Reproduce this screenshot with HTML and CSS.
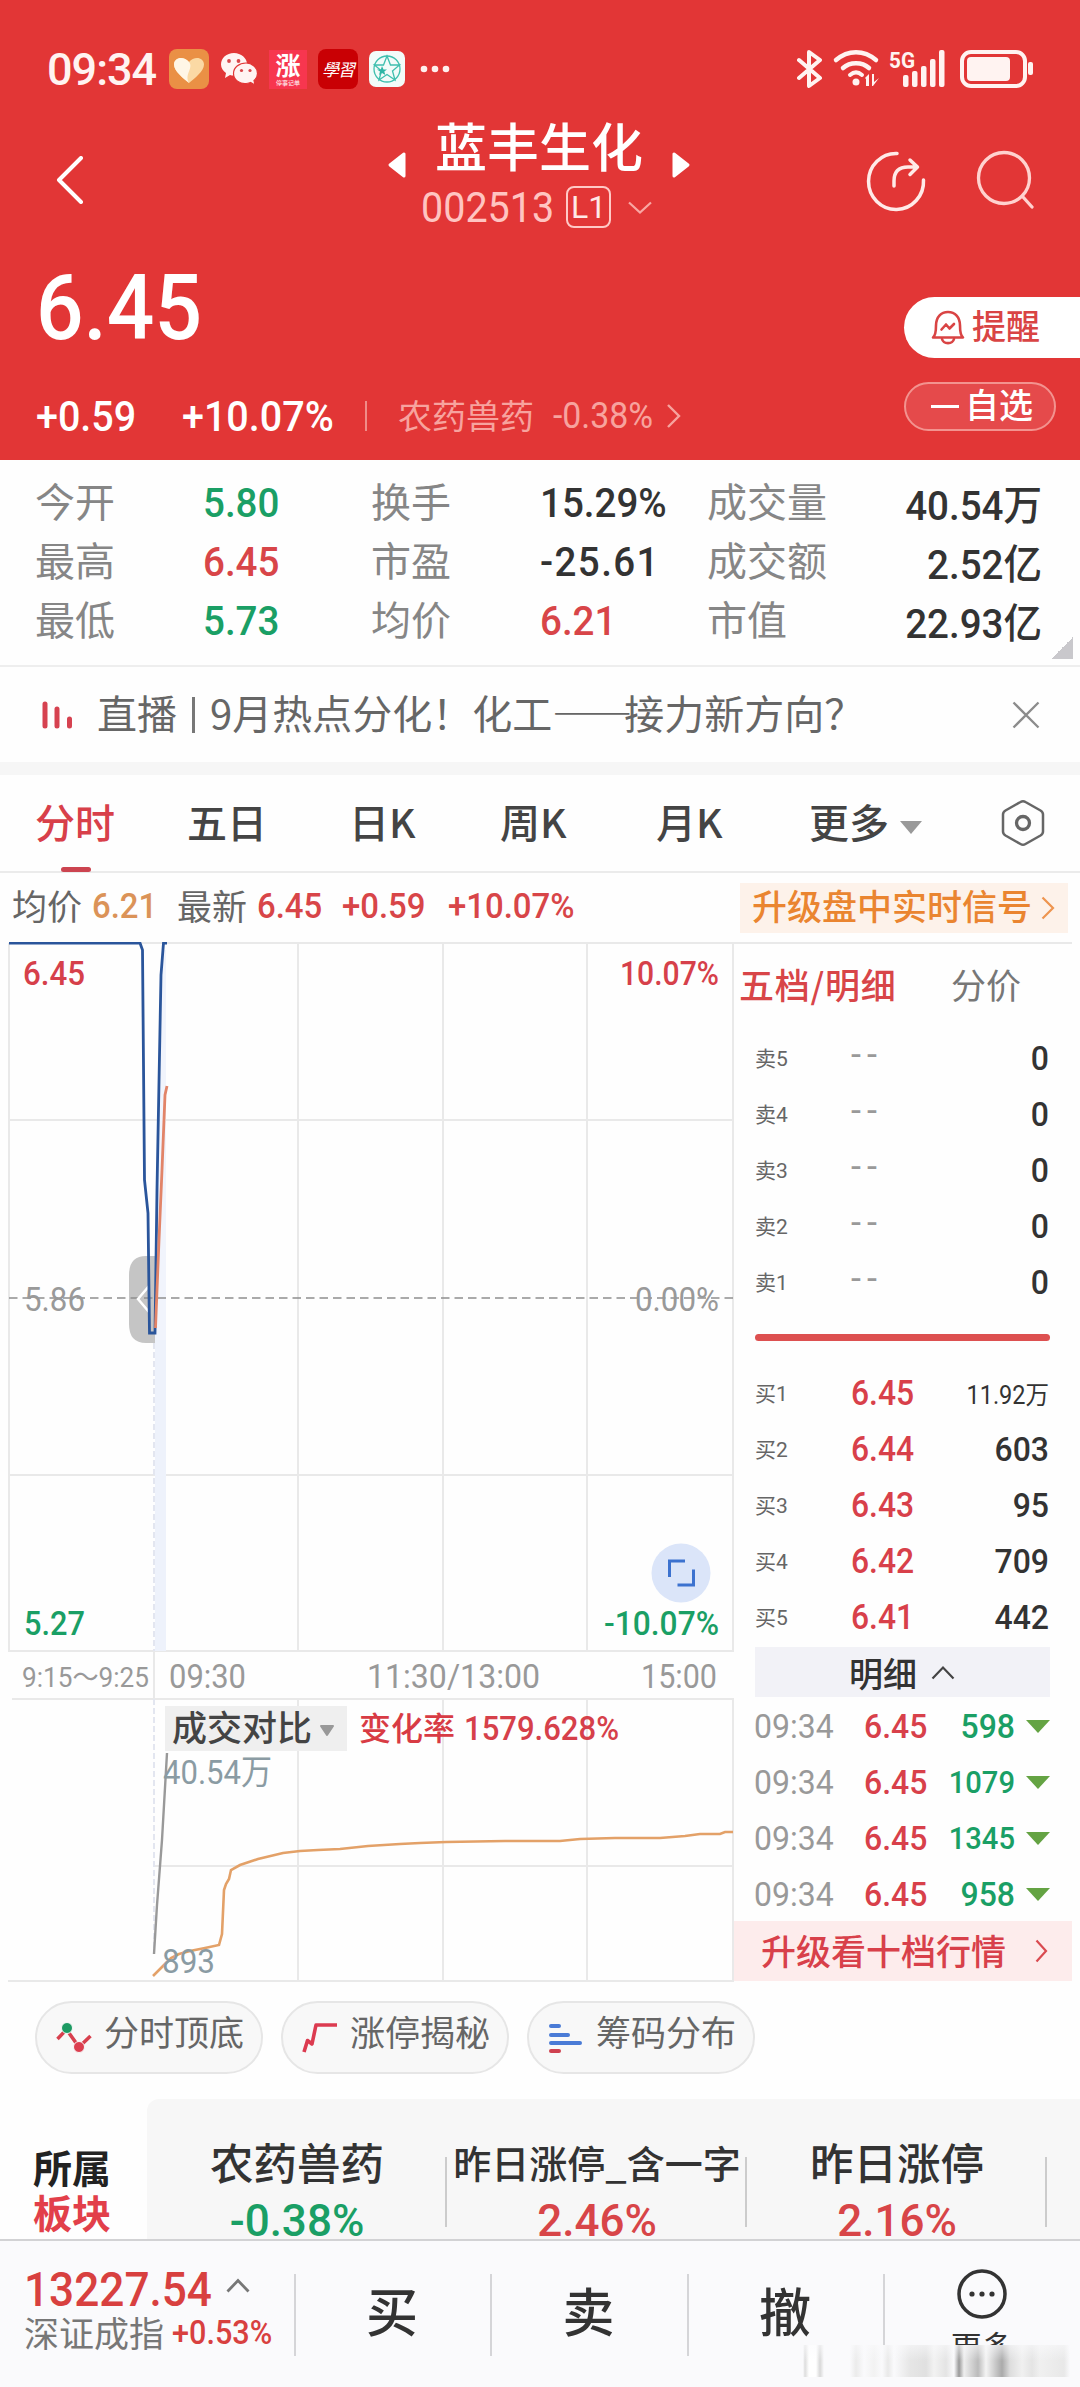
FILE: index.html
```
<!DOCTYPE html>
<html lang="zh-CN">
<head>
  <meta charset="UTF-8">
  <meta name="viewport" content="width=device-width, initial-scale=1.0">
  <title>蓝丰生化 002513</title>
  <link rel="stylesheet" href="styles.css">
</head>
<body>
<header class="top">
  <div class="status-bar">
    <span class="clock">09:34</span>
    <svg class="app-icon heart" width="40" height="40" viewBox="0 0 40 40">
      <rect width="40" height="40" rx="8" fill="#ea9045"/>
      <path d="M20 34C14 29 5 22 5 15.500C5 8 15 6.500 20 13C25 6.500 35 8 35 15.500C35 22 26 29 20 34Z" fill="#fbd9a4"/>
      <path d="M20 34C14 29 5 22 5 15.500C5 8 15 6.500 20 13C25 19 15 25 20 34Z" fill="#fff6e6"/>
    </svg>
    <svg class="app-icon wechat" width="38" height="34" viewBox="0 0 38 34">
      <path d="M14 1C6.500 1 1 6 1 12.500C1 16 3 19 6 21L5 26L10 23C17 25 27 21 27 12C27 6 21 1 14 1Z" fill="#fff4f2"/>
      <path d="M26 11C19 11 13.500 15.500 13.500 21.500C13.500 28 20 32 26 31.500C28 31.500 29 31 30.500 30.500L35 33L34 28.500C36 27 37.500 24.500 37.500 21.500C37.500 15.500 32 11 26 11Z" fill="#fff4f2" stroke="#e23636" stroke-width="1.200"/>
      <g fill="#d9474a"><circle cx="9" cy="9" r="1.900"/><circle cx="18.500" cy="9" r="1.900"/><circle cx="21.500" cy="18.500" r="1.600"/><circle cx="30" cy="18.500" r="1.600"/></g>
    </svg>
    <div class="app-icon zhang"><b>涨</b><i>停事记单</i></div>
    <div class="app-icon xuexi">學習</div>
    <svg class="app-icon star" width="36" height="36" viewBox="0 0 36 36">
      <rect width="36" height="36" rx="7" fill="#f3fbf9"/>
      <g fill="none" stroke="#3fbfae" stroke-width="1.300"><circle cx="18" cy="18" r="13"/><path d="M18 5L21.500 14H30.500L23.500 20L26 29L18 23.500L10 29L12.500 20L5.500 14H14.500Z"/></g>
      <path d="M13 15L14.500 18.500H18L15.300 20.600L16.300 24L13 22L10 24L11 20.500L8 18.500H11.800Z" fill="#2fb5a5"/>
    </svg>
    <svg class="dots" width="30" height="8" viewBox="0 0 30 8" fill="#fff0ee"><circle cx="4" cy="4" r="3.300"/><circle cx="15" cy="4" r="3.300"/><circle cx="26" cy="4" r="3.300"/></svg>

    <svg class="system" width="238" height="44" viewBox="797 47 238 44">
      <g fill="none" stroke="#fff3f1" stroke-linecap="round" stroke-linejoin="round">
        <path d="M799 60L820 78L809 86V52L820 60L799 78" stroke-width="4"/>
        <path d="M836 60C848 49.500 864 49.500 876 60" stroke-width="4.500"/>
        <path d="M843 68C850 61.500 862 61.500 869 68" stroke-width="4.500"/>
        <path d="M850 75C854 71.500 858 71.500 862 75" stroke-width="4"/>
        <rect x="962" y="52" width="63" height="34" rx="9" stroke-width="4"/>
      </g>
      <g fill="#fff3f1">
        <circle cx="856" cy="82" r="3.500"/>
        <path d="M865 78L869 74V86H866V79ZM872 74H874V82L879 78L873 86H872Z"/>
        <rect x="903" y="75" width="5.500" height="12" rx="2"/>
        <rect x="912" y="71" width="5.500" height="16" rx="2"/>
        <rect x="921" y="66" width="5.500" height="21" rx="2"/>
        <rect x="930" y="59" width="5.500" height="28" rx="2"/>
        <rect x="939" y="50" width="5.500" height="37" rx="2"/>
        <rect x="967" y="57" width="43" height="24" rx="4"/>
        <rect x="1028" y="62" width="5" height="13" rx="2"/>
      </g>
      <text x="889" y="68" class="g5" textLength="26" lengthAdjust="spacingAndGlyphs">5G</text>
    </svg>
  </div>

  <div class="nav">
    <svg class="back" width="28" height="48" viewBox="0 0 28 48"><path d="M25 2L3 24L25 46" fill="none" stroke="#fff" stroke-width="4" stroke-linecap="round" stroke-linejoin="round"/></svg>
    <svg class="prev" width="20" height="28" viewBox="0 0 20 28"><path d="M17 3V25L3 14Z" fill="#fff" stroke="#fff" stroke-width="3" stroke-linejoin="round"/></svg>
    <div class="stock">
      <h1>蓝丰生化</h1>
      <div class="code"><span class="num">002513</span><span class="level">L1</span>
        <svg width="24" height="13" viewBox="0 0 24 13"><path d="M1 1.500L12 11.500L23 1.500" fill="none" stroke="#f9a7a3" stroke-width="2.200"/></svg>
      </div>
    </div>
    <svg class="next" width="20" height="28" viewBox="0 0 20 28"><path d="M3 3V25L17 14Z" fill="#fff" stroke="#fff" stroke-width="3" stroke-linejoin="round"/></svg>
    <svg class="share" width="60" height="62" viewBox="0 0 60 62" fill="none" stroke="#ffeae8" stroke-width="3.500" stroke-linecap="round" stroke-linejoin="round"><path d="M31 3.500A27.500 28 0 1 0 57.500 30"/><path d="M28 36V31Q28 17 42 17H51M44 10L51.500 17L44 24.500"/></svg>
    <svg class="search" width="58" height="62" viewBox="0 0 58 62" fill="none" stroke="#ffd2cf" stroke-width="3.300" stroke-linecap="round"><circle cx="28" cy="29" r="25.500"/><path d="M47 48L56 58"/></svg>
  </div>

  <div class="quote">
    <div class="quote-left">
      <div class="price num">6.45</div>
      <div class="change">
        <span class="num diff">+0.59</span><span class="num pct">+10.07%</span><span class="bar"></span>
        <span class="industry">农药兽药</span><span class="num industry-pct">-0.38%</span>
        <svg width="16" height="26" viewBox="0 0 16 26"><path d="M2 2L13 13L2 24" fill="none" stroke="#f7a39e" stroke-width="2.400"/></svg>
      </div>
    </div>
    <div class="actions">
      <div class="remind">
        <svg width="34" height="36" viewBox="0 0 34 36" fill="none" stroke="#d94444" stroke-width="2.600" stroke-linejoin="round" stroke-linecap="round"><path d="M2 27.500C4.500 25.500 5 22 5 15.500C5 7 10 2 17 2S29 7 29 15.500C29 22 29.500 25.500 32 27.500Z"/><path d="M11 29C12.500 34.500 21.500 34.500 23 29"/><path d="M10.500 19.500L15 14.500L18.500 18.500L23 14"/></svg>
        <span>提醒</span>
      </div>
      <div class="favor"><i></i><span>自选</span></div>
    </div>
  </div>
</header>

<section class="stats">
  <span class="k">今开</span><span class="num green">5.80</span><span class="k">换手</span><span class="num">15.29%</span><span class="k">成交量</span><span class="num r">40.54万</span>
  <span class="k">最高</span><span class="num red">6.45</span><span class="k">市盈</span><span class="num spaced">-25.61</span><span class="k">成交额</span><span class="num r">2.52亿</span>
  <span class="k">最低</span><span class="num green">5.73</span><span class="k">均价</span><span class="num red">6.21</span><span class="k">市值</span><span class="num r">22.93亿</span>
  <i class="corner"></i>
</section>

<section class="notice">
  <svg width="32" height="28" viewBox="0 0 32 28" stroke="#d64250" stroke-width="5" stroke-linecap="round"><path d="M3 3V25M15 8V25M27.500 18V25"/></svg>
  <span class="notice-text">直播<i></i>9月热点分化！化工<span class="dash">——</span>接力新方向？</span>
  <svg width="28" height="28" viewBox="0 0 28 28" stroke="#8c8c8c" stroke-width="2.300"><path d="M1.500 1.500L26.500 26.500M26.500 1.500L1.500 26.500"/></svg>
</section>

<nav class="tabs">
  <span class="on">分时</span><span>五日</span><span>日K</span><span>周K</span><span>月K</span><span>更多<i class="down"></i></span>
  <svg width="44" height="48" viewBox="0 0 44 48" fill="none" stroke="#666"><path d="M19.500 3Q22 1.500 24.500 3L39.500 11.500Q42 13 42 15.500V32.500Q42 35 39.500 36.500L24.500 45Q22 46.500 19.500 45L4.500 36.500Q2 35 2 32.500V15.500Q2 13 4.500 11.500Z" stroke-width="2.500"/><circle cx="22" cy="24" r="6.500" stroke-width="3.300"/></svg>
</nav>

<div class="summary">
  <span class="lbl">均价</span><span class="num avg">6.21</span><span class="lbl">最新</span><span class="num red s1">6.45</span><span class="num red s2">+0.59</span><span class="num red s3">+10.07%</span>
  <div class="signal"><span>升级盘中实时信号</span><svg width="14" height="24" viewBox="0 0 14 24"><path d="M1.500 1.500L12 12L1.500 22.500" fill="none" stroke="#ee9550" stroke-width="2.200"/></svg></div>
</div>

<main class="board">
  <svg class="chart" width="734" height="1040" viewBox="0 942 734 1040">
    <!-- 网格 -->
    <g stroke="#e9e9e9" stroke-width="2">
      <path d="M9 943V1651M298 943V1651M443 943V1651M587 943V1651M733 943V1651"/>
      <path d="M9 943H734M9 1120H734M9 1475H734M8 1651H734M12 1699H734"/>
      <path d="M154 1651V1699M298 1699V1981M443 1699V1981M587 1699V1981M733 1699V1981M154 1866H734M8 1981H734"/>
      <path d="M154 1343V1651M154 1699V1954" stroke="#e3e6f0" stroke-dasharray="6 3"/>
    </g>
    <rect x="155" y="1330" width="11" height="321" fill="#eef2fb"/>
    <path d="M155 1332L163 950H166V1340H155Z" fill="#f1f4fc"/>
    <path d="M155 1256H146Q129 1256 129 1275V1324Q129 1343 146 1343H155Z" fill="#c5c5c5"/>
    <path d="M9 1298H733" stroke="#8f8f8f" stroke-width="1.500" stroke-dasharray="8.500 5"/>
    <path d="M149 1286L138 1299L149 1312" fill="none" stroke="#fff" stroke-width="2.500"/>
    <!-- 价格与均价线 -->
    <path d="M9 943H140L142.500 950L144.500 1180L148 1213L149.500 1333H155L157 1190L161 975L163.500 943H167" fill="none" stroke="#2a559b" stroke-width="2.800"/>
    <path d="M155.500 1328L159 1240L162 1170L165 1095L167 1086" fill="none" stroke="#e28468" stroke-width="2.800"/>
    <g class="axis">
      <text x="23" y="985" class="fr" textLength="62" lengthAdjust="spacingAndGlyphs">6.45</text>
      <text x="620" y="985" class="fr" textLength="99" lengthAdjust="spacingAndGlyphs">10.07%</text>
      <text x="24" y="1311" textLength="61" lengthAdjust="spacingAndGlyphs">5.86</text>
      <text x="635" y="1311" textLength="84" lengthAdjust="spacingAndGlyphs">0.00%</text>
      <text x="24" y="1635" class="fg" textLength="61" lengthAdjust="spacingAndGlyphs">5.27</text>
      <text x="604" y="1635" class="fg" textLength="115" lengthAdjust="spacingAndGlyphs">-10.07%</text>
      <text x="22" y="1687" class="sm" textLength="127" lengthAdjust="spacingAndGlyphs">9:15～9:25</text>
      <text x="169" y="1688" textLength="77" lengthAdjust="spacingAndGlyphs">09:30</text>
      <text x="367" y="1688" textLength="173" lengthAdjust="spacingAndGlyphs">11:30/13:00</text>
      <text x="641" y="1688" textLength="76" lengthAdjust="spacingAndGlyphs">15:00</text>
    </g>
    <circle cx="681" cy="1573" r="29.500" fill="#dbe5f9"/>
    <path d="M685 1561H669.500V1577M677.500 1585H693.500V1569.500" fill="none" stroke="#3c72cf" stroke-width="3"/>
    <!-- 成交对比 -->
    <path d="M167 1753L162 1840L157 1905L154 1954" fill="none" stroke="#999" stroke-width="2.400"/>
    <path d="M153 1976L160 1969L164 1965L171 1958L179 1954L190 1951L205 1948L219 1945L222 1934L224 1890L226 1884L229 1879L231 1870L240 1865L258 1859L283 1853L300 1851L318 1850L340 1849L368 1846L400 1844L420 1843L446 1842L505 1841L560 1841L580 1839L615 1838L660 1838L685 1836L700 1834L720 1834L725 1832H733" fill="none" stroke="#e3a168" stroke-width="2.600"/>
    <rect x="165" y="1706" width="182" height="45" fill="#efefef"/>
    <text x="172" y="1741" class="cn" fill="#444" font-size="35">成交对比</text>
    <path d="M321 1726H333L327 1735Z" fill="#999" stroke="#999" stroke-width="2" stroke-linejoin="round"/>
    <text x="359" y="1740" class="cn" fill="#d83b44" font-size="32">变化率</text>
    <g class="axis">
      <text x="464" y="1740" class="fr" textLength="155" lengthAdjust="spacingAndGlyphs">1579.628%</text>
      <text x="163" y="1784" class="fb" textLength="109" lengthAdjust="spacingAndGlyphs">40.54万</text>
      <text x="162" y="1973" class="fb" textLength="53" lengthAdjust="spacingAndGlyphs">893</text>
    </g>
  </svg>

  <aside class="depth">
    <div class="depth-tabs"><span class="red">五档/明细</span><span>分价</span></div>
    <ul class="levels">
      <li><span>卖5</span><b class="none">--</b><em class="num">0</em></li>
      <li><span>卖4</span><b class="none">--</b><em class="num">0</em></li>
      <li><span>卖3</span><b class="none">--</b><em class="num">0</em></li>
      <li><span>卖2</span><b class="none">--</b><em class="num">0</em></li>
      <li><span>卖1</span><b class="none">--</b><em class="num">0</em></li>
    </ul>
    <div class="ratio"></div>
    <ul class="levels">
      <li><span>买1</span><b class="num">6.45</b><em class="num small">11.92万</em></li>
      <li><span>买2</span><b class="num">6.44</b><em class="num">603</em></li>
      <li><span>买3</span><b class="num">6.43</b><em class="num">95</em></li>
      <li><span>买4</span><b class="num">6.42</b><em class="num">709</em></li>
      <li><span>买5</span><b class="num">6.41</b><em class="num">442</em></li>
    </ul>
    <div class="detail-bar">明细<svg width="24" height="15" viewBox="0 0 24 15"><path d="M1.500 13.500L12 2.500L22.500 13.500" fill="none" stroke="#444" stroke-width="2.200"/></svg></div>
    <ul class="trades">
      <li><span class="num">09:34</span><b class="num">6.45</b><em class="num">598</em><i></i></li>
      <li><span class="num">09:34</span><b class="num">6.45</b><em class="num long">1079</em><i></i></li>
      <li><span class="num">09:34</span><b class="num">6.45</b><em class="num long">1345</em><i></i></li>
      <li><span class="num">09:34</span><b class="num">6.45</b><em class="num">958</em><i></i></li>
    </ul>
    <div class="upgrade"><span>升级看十档行情</span><svg width="13" height="24" viewBox="0 0 13 24"><path d="M1.500 1.500L11 12L1.500 22.500" fill="none" stroke="#d94a50" stroke-width="2.200"/></svg></div>
  </aside>
</main>

<div class="tools">
  <div class="tool">
    <svg width="38" height="32" viewBox="0 0 38 32"><path d="M2.500 17L11.500 7.500L24 25L35.500 14" fill="none" stroke="#d8404e" stroke-width="3.500"/><circle cx="12" cy="6" r="5.500" fill="#1c9a62" stroke="#f8f8f8"/><circle cx="24" cy="25" r="5.500" fill="#dc3f50" stroke="#f8f8f8"/></svg>
    <span>分时顶底</span>
  </div>
  <div class="tool">
    <svg width="38" height="32" viewBox="0 0 38 32"><path d="M3 30L6.500 18.500L11 22L15 3H36" fill="none" stroke="#dc3b50" stroke-width="3.600" stroke-linejoin="round"/></svg>
    <span>涨停揭秘</span>
  </div>
  <div class="tool">
    <svg width="38" height="32" viewBox="0 0 38 32" stroke-width="4" stroke-linecap="round"><path d="M4 4H12M4 13H21M4 21H33" stroke="#4a7bd6"/><path d="M4 29H12" stroke="#cf4150"/></svg>
    <span>筹码分布</span>
  </div>
</div>

<section class="sectors">
  <div class="belong"><span>所属</span><span class="hot">板块</span></div>
  <div class="sector-list">
    <div class="sector"><span>农药兽药</span><b class="num green">-0.38%</b></div>
    <div class="sector"><span class="tight">昨日涨停_含一字</span><b class="num red">2.46%</b></div>
    <div class="sector"><span>昨日涨停</span><b class="num red">2.16%</b></div>
  </div>
</section>

<footer class="trade-bar">
  <div class="index">
    <div class="index-top"><b class="num">13227.54</b><svg width="24" height="15" viewBox="0 0 24 15"><path d="M1.500 13.500L12 2.500L22.500 13.500" fill="none" stroke="#777" stroke-width="2.800"/></svg></div>
    <div class="index-sub"><span>深证成指</span><b class="num">+0.53%</b></div>
  </div>
  <div class="btn">买</div>
  <div class="btn">卖</div>
  <div class="btn">撤</div>
  <div class="btn more">
    <svg width="52" height="52" viewBox="0 0 52 52"><circle cx="26" cy="26" r="23" fill="none" stroke="#333" stroke-width="3.500"/><g fill="#333"><circle cx="16" cy="26" r="2.600"/><circle cx="26" cy="26" r="2.600"/><circle cx="36" cy="26" r="2.600"/></g></svg>
    <span>更多</span>
  </div>
  <div class="smear"></div>
</footer>
</body>
</html>
```
FILE: styles.css
```
* {
  margin: 0;
  padding: 0;
  box-sizing: border-box;
}

body {
  width: 1080px;
  height: 2387px;
  overflow: hidden;
  background: #fefefe;
  color: #333;
  font-family: "Noto Sans CJK SC", sans-serif;
}

svg {
  display: block;
  flex: none;
}

i, em {
  font-style: normal;
}

ul {
  list-style: none;
}

/* 窄体数字 */
.num {
  font-family: Roboto, "Noto Sans CJK SC", sans-serif;
  font-weight: 500;
  white-space: nowrap;
  transform: scaleX(.94);
  transform-origin: left center;
}

.red { color: #d84548; }
.green { color: #1a9f65; }

/* 顶部 */
.top {
  height: 460px;
  background: #e23636;
  color: #fff;
}

.status-bar {
  display: flex;
  align-items: center;
  height: 138px;
  padding-left: 47px;
}

.clock {
  width: 122px;
  font: 500 45px Roboto, sans-serif;
  letter-spacing: -1px;
  color: #fff3f1;
}

.app-icon { margin-right: 11px; }

.zhang {
  display: flex;
  flex-direction: column;
  align-items: center;
  width: 38px;
  height: 39px;
  background: #f7364f;
}

.zhang b { font-size: 25px; line-height: 28px; }
.zhang i { font-size: 6px; line-height: 9px; }

.xuexi {
  width: 40px;
  height: 40px;
  border-radius: 8px;
  background: #c90004;
  font: italic 17px/40px "Noto Sans CJK SC", sans-serif;
  text-align: center;
  letter-spacing: -1px;
}

.dots { margin-left: 4px; }

.system {
  margin-left: auto;
  margin-right: 45px;
}

.g5 {
  font: 700 22px Roboto, sans-serif;
  fill: #fff3f1;
}

.nav {
  display: flex;
  height: 122px;
}

.back { margin: 18px 0 0 56px; }
.prev { margin: 13px 0 0 303px; }

.stock {
  width: 266px;
  margin-left: 14px;
}

.stock h1 {
  margin: -19px 0 0 14px;
  font-size: 52px;
  font-weight: 500;
  line-height: 52px;
  white-space: nowrap;
}

.code {
  display: flex;
  align-items: center;
  height: 44px;
  margin-top: 14px;
  color: #ffc4c1;
}

.code .num {
  width: 145px;
  font-size: 42px;
  font-weight: 400;
}

.level {
  width: 45px;
  height: 42px;
  margin-right: 17px;
  border: 2px solid #ffc9c6;
  border-radius: 8px;
  color: #ffe9e7;
  font: 32px/39px Roboto, sans-serif;
  text-align: center;
}

.next { margin: 13px 0 0 -16px; }
.share { margin: 12px 0 0 175px; }
.search { margin: 11px 0 0 50px; }

.quote {
  display: flex;
  justify-content: space-between;
  height: 200px;
}

.quote-left { padding-left: 36px; }

.price {
  height: 106px;
  padding-top: 3px;
  font-size: 91px;
  line-height: 90px;
  transform: scaleX(.92);
}

.change {
  display: flex;
  align-items: center;
  height: 44px;
  margin-top: 28px;
  font-size: 42px;
  color: #f7a39e;
}

.change .diff { width: 146px; color: #fff; }
.change .pct { width: 183px; color: #fff; }

.bar {
  width: 2px;
  height: 30px;
  margin-right: 31px;
  background: #f08c88;
}

.industry {
  width: 155px;
  margin-top: -3px;
  font-size: 34px;
}

.change .industry-pct {
  width: 113px;
  font-size: 36px;
  font-weight: 400;
}

.actions {
  width: 176px;
  padding-top: 37px;
}

.remind {
  display: flex;
  align-items: center;
  height: 61px;
  padding-left: 27px;
  border-radius: 31px 0 0 31px;
  background: #fff;
  color: #d94444;
  font-size: 34px;
  font-weight: 500;
}

.remind span { margin: -6px 0 0 7px; }

.favor {
  display: flex;
  align-items: center;
  width: 152px;
  height: 49px;
  margin-top: 24px;
  padding-left: 25px;
  border: 2px solid #f3938f;
  border-radius: 25px;
  background: #e54a4b;
  font-size: 34px;
  font-weight: 500;
  line-height: 44px;
}

.favor i {
  width: 28px;
  height: 3px;
  margin-right: 6px;
  background: #fff;
}

.favor span { margin-top: -5px; }

/* 行情数据 */
.stats {
  position: relative;
  display: grid;
  grid-template-columns: 168px 168px 169px 167px 170px 165px;
  grid-auto-rows: 59px;
  align-items: center;
  height: 207px;
  padding: 12px 0 0 35px;
  border-bottom: 2px solid #eee;
  font-size: 41px;
}

.stats .k {
  margin-top: -4px;
  color: #868686;
  font-size: 40px;
}

.stats .num { margin-top: 2px; }

.stats .r {
  margin-top: 0;
  text-align: right;
  transform-origin: right center;
}

.stats .spaced { letter-spacing: 1.5px; }

.corner {
  position: absolute;
  right: 7px;
  bottom: 6px;
  width: 22px;
  height: 22px;
  background: linear-gradient(135deg, transparent 50%, #c9c8cc 50%);
}

.notice {
  display: flex;
  align-items: center;
  height: 95px;
  padding: 0 40px 0 42px;
  color: #666;
}

.notice-text {
  flex: 1;
  margin: -6px 0 0 23px;
  font-size: 40px;
  white-space: nowrap;
}

.notice-text i {
  display: inline-block;
  width: 3px;
  height: 36px;
  margin: 0 15px;
  background: #777;
  vertical-align: -4px;
}

.dash { letter-spacing: -8px; }

.tabs {
  display: grid;
  grid-template-columns: 152px 162px 151px 156px 153px 192px 46px;
  align-items: center;
  height: 111px;
  padding: 13px 0 0 35px;
  border-bottom: 2px solid #ebebeb;
  background: linear-gradient(#f6f6f6 13px, #fefefe 13px);
  color: #444;
  font-size: 40px;
  font-weight: 500;
}

.tabs span {
  position: relative;
  margin-top: -5px;
  white-space: nowrap;
}

.tabs .on { color: #d8404a; }

.tabs .on::after {
  content: '';
  position: absolute;
  left: 26px;
  bottom: -22px;
  width: 30px;
  height: 5px;
  border-radius: 3px;
  background: #cc4450;
}

.down {
  display: inline-block;
  margin-left: 11px;
  border: 11px solid transparent;
  border-top: 13px solid #999;
  border-bottom: 0;
  vertical-align: 4px;
}

.summary {
  display: flex;
  align-items: center;
  height: 69px;
  padding-left: 12px;
  font-size: 35px;
}

.summary .num { margin-top: -3px; }
.lbl { width: 80px; margin-top: -7px; color: #666; }
.avg { width: 85px; color: #db9358; }
.s1 { width: 85px; }
.s2 { width: 106px; }
.s3 { width: 292px; }

.signal {
  display: flex;
  align-items: center;
  gap: 9px;
  width: 328px;
  height: 50px;
  padding-left: 12px;
  background: #fdf2ea;
  color: #ea8530;
  font-weight: 500;
  white-space: nowrap;
}

.signal span { margin-top: -7px; }

/* 分时图 + 盘口 */
.board {
  display: flex;
  height: 1040px;
}

.axis text {
  font: 34px Roboto, "Noto Sans CJK SC", sans-serif;
  fill: #999;
}

.axis .sm { font-size: 27px; }
.axis .fr { fill: #d6404a; font-weight: 500; }
.axis .fg { fill: #1a9f65; font-weight: 500; }
.axis .fb { fill: #8a9ba3; }

.cn {
  font-family: "Noto Sans CJK SC", sans-serif;
  font-weight: 500;
}

.depth {
  width: 338px;
  border-top: 2px solid #e9e9e9;
}

.depth-tabs {
  display: flex;
  align-items: center;
  justify-content: space-between;
  height: 86px;
  padding: 0 51px 8px 5px;
  font-size: 35px;
  color: #777;
}

.depth-tabs .red {
  font-weight: 500;
  letter-spacing: .8px;
}

.levels li {
  display: flex;
  align-items: center;
  height: 56px;
  padding: 0 23px 0 21px;
}

.levels span {
  width: 96px;
  margin-top: -2px;
  color: #666;
  font: 21px Roboto, "Noto Sans CJK SC", sans-serif;
}

.levels b {
  width: 80px;
  color: #d8404a;
  font-size: 35px;
  transform: scaleX(.91);
}

.levels .none {
  margin-top: -6px;
  color: #999;
  font: 36px Roboto, sans-serif;
  letter-spacing: 6px;
  transform: none;
}

.levels em {
  flex: 1;
  text-align: right;
  font-size: 34px;
  transform-origin: right center;
}

.levels .small {
  font-size: 25px;
  font-weight: 400;
}

.ratio {
  height: 7px;
  margin: 24px 22px 24px 21px;
  border-radius: 4px;
  background: #dd5050;
}

.detail-bar {
  display: flex;
  align-items: center;
  gap: 14px;
  height: 50px;
  margin: 2px 22px 0 21px;
  padding-left: 94px;
  background: #f2f2f7;
  font-size: 34px;
  font-weight: 500;
}

.trades li {
  display: flex;
  align-items: center;
  height: 56px;
  padding: 2px 22px 0 20px;
  font-size: 34px;
}

.trades span { width: 110px; color: #999; font-weight: 400; }
.trades b { width: 76px; color: #d8404a; }

.trades em {
  flex: 1;
  text-align: right;
  color: #1a9f65;
  transform-origin: right center;
}

.trades .long { font-size: 31px; }

.trades i {
  margin-left: 11px;
  border: 12px solid transparent;
  border-top: 13px solid #64a343;
  border-bottom: 0;
}

.upgrade {
  display: flex;
  align-items: center;
  gap: 29px;
  height: 60px;
  padding-left: 27px;
  background: #fdecec;
  color: #d8404a;
  font-size: 35px;
  font-weight: 500;
  white-space: nowrap;
}

.upgrade span { margin-top: -4px; }

.tools {
  display: flex;
  gap: 18px;
  height: 117px;
  padding: 19px 0 0 35px;
}

.tool {
  display: flex;
  align-items: center;
  width: 228px;
  height: 73px;
  padding-left: 18px;
  border: 2px solid #e6e6e6;
  border-radius: 37px;
  background: #f8f8f8;
  color: #666;
  font-size: 35px;
  white-space: nowrap;
}

.tool span { margin: -15px 0 0 11px; }

.sectors {
  display: flex;
  height: 140px;
}

.belong {
  width: 147px;
  padding: 45px 0 0 33px;
  font-size: 39px;
  font-weight: 700;
  line-height: 45px;
  color: #222;
}

.belong span { display: block; }
.belong .hot { color: #e23f4a; }

.sector-list {
  display: flex;
  flex: 1;
  border-top-left-radius: 12px;
  background: #f7f7f7;
}

.sector {
  display: flex;
  flex-direction: column;
  align-items: center;
  width: 300px;
  padding-top: 36px;
  background: linear-gradient(#ccc, #ccc) no-repeat right 58px / 2px 70px;
}

.sector span {
  font-size: 43.5px;
  font-weight: 500;
  line-height: 54px;
  white-space: nowrap;
}

.sector .tight { font-size: 38px; }

.sector b {
  margin-top: 2px;
  font-size: 44px;
  line-height: 60px;
  transform: none;
}

/* 底部交易栏 */
.trade-bar {
  position: relative;
  display: flex;
  height: 148px;
  border-top: 2px solid #d2d2d4;
  background: #fafafc;
}

.index {
  width: 295px;
  padding: 24px 0 0 24px;
}

.index-top {
  display: flex;
  gap: 12px;
  height: 50px;
}

.index-top b {
  width: 190px;
  color: #d8403f;
  font-size: 48px;
  line-height: 50px;
  transform: scaleX(.92);
}

.index-top svg { margin-top: 13px; }

.index-sub {
  display: flex;
  align-items: center;
  height: 34px;
  font-size: 35px;
  line-height: 34px;
  color: #777;
}

.index-sub span { width: 148px; }

.index-sub b {
  color: #d8403f;
  font-size: 34px;
  transform: scaleX(.9);
}

.btn {
  width: 197.500px;
  padding-top: 29px;
  background: linear-gradient(#d5d5d8, #d5d5d8) no-repeat left 33px / 2px 82px;
  font-size: 52px;
  font-weight: 500;
  line-height: 80px;
  text-align: center;
}

.more {
  display: flex;
  flex-direction: column;
  align-items: center;
  padding-top: 27px;
}

.more span {
  margin-top: 5px;
  font-size: 31px;
  font-weight: 400;
  line-height: 40px;
}

/* 右下角的模糊条纹 */
.smear {
  position: absolute;
  left: 800px;
  top: 104px;
  width: 272px;
  height: 32px;
  background:
    linear-gradient(rgba(250, 250, 252, .6), transparent 50%),
    linear-gradient(90deg, #fafafc 3px, #ddd 5px, #fff 9px, #fff 16px, #d8d8d8 20px, #fafafc 24px,
      #fafafc 50px, #ebebeb 56px, #fafafc 64px, #f2f2f2 74px, #fafafc 82px, #e9e9e9 88px, #fafafc 94px,
      #e6e6e6 110px, #e0e0e0 126px, #f2f2f2 134px, #e4e4e4 146px, #fafafc 154px, #999 159px, #eee 164px,
      #bbb 178px, #f4f4f4 186px, #aaa 202px, #ddd 210px, #f0f0f0 222px, #e4e4e4 232px, #f0f0f0 240px, #e8e8e8 264px, #fafafc 270px);
}
```
